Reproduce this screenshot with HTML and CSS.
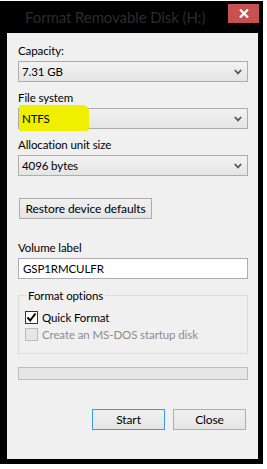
FILE: index.html
```html
<!DOCTYPE html>
<html lang="en">
<head>
    <meta charset="UTF-8">
    <meta name="viewport" content="width=device-width, initial-scale=1.0">
    <title>Format Removable Disk (H:)</title>
    <link rel="stylesheet" href="styles.css">
</head>
<body>
    <div class="window">
        <div class="titlebar">
            <div class="title">Format Removable Disk (H:)</div>
            <div class="close-btn">
                <svg width="10" height="9" viewBox="0 0 10 9"><path d="M1 0.5 L9 8.5 M9 0.5 L1 8.5" stroke="#fff" stroke-width="2.2"/></svg>
            </div>
        </div>
        <div class="client">
            <div class="label first">Capacity:</div>
            <div class="combo">
                <span>7.31 GB</span>
                <svg class="chev" width="8" height="6" viewBox="0 0 8 6"><path d="M0.8 1 L4 4.4 L7.2 1" fill="none" stroke="#555" stroke-width="1.8"/></svg>
            </div>

            <div class="label">File system</div>
            <div class="combo highlighted">
                <span class="marker">NTFS</span>
                <svg class="chev" width="8" height="6" viewBox="0 0 8 6"><path d="M0.8 1 L4 4.4 L7.2 1" fill="none" stroke="#555" stroke-width="1.8"/></svg>
            </div>

            <div class="label">Allocation unit size</div>
            <div class="combo">
                <span>4096 bytes</span>
                <svg class="chev" width="8" height="6" viewBox="0 0 8 6"><path d="M0.8 1 L4 4.4 L7.2 1" fill="none" stroke="#555" stroke-width="1.8"/></svg>
            </div>

            <button class="btn restore">Restore device defaults</button>

            <div class="label volume">Volume label</div>
            <div class="textbox">GSP1RMCULFR</div>

            <fieldset class="group">
                <legend>Format options</legend>
                <div class="check-row">
                    <span class="checkbox checked">
                        <svg width="11" height="11" viewBox="0 0 11 11"><path d="M1.5 5.5 L4.2 8.5 L9.5 1.5" fill="none" stroke="#000" stroke-width="2"/></svg>
                    </span>
                    <span>Quick Format</span>
                </div>
                <div class="check-row disabled">
                    <span class="checkbox"></span>
                    <span>Create an MS-DOS startup disk</span>
                </div>
            </fieldset>

            <div class="progress"></div>

            <div class="actions">
                <button class="btn default">Start</button>
                <button class="btn">Close</button>
            </div>
        </div>
    </div>
</body>
</html>
```

FILE: styles.css
```css
body {
    margin: 0;
    padding-top: 1px;
    background: #fff;
    font-family: Lato, "Open Sans", sans-serif;
    font-size: 11.5px;
    letter-spacing: -0.1px;
    color: #000;
}
.window {
    width: 263px;
    height: 463px;
    background: #000;
    display: flex;
    flex-direction: column;
}
.titlebar {
    height: 32px;
    display: flex;
    align-items: flex-start;
}
.title {
    padding-left: 25px;
    padding-top: 6px;
    font-size: 15px;
    line-height: 20px;
    color: #2c2c2c;
    white-space: nowrap;
}
.close-btn {
    margin-left: auto;
    margin-right: 4px;
    margin-top: 3px;
    width: 31px;
    height: 19px;
    background: #c75050;
    display: flex;
    align-items: center;
    justify-content: center;
}
.client {
    margin-left: 7px;
    width: 240px;
    height: 416px;
    padding: 10px 0 0 11px;
    background: #f0f0f0;
    display: flex;
    flex-direction: column;
    align-items: flex-start;
}
.label {
    line-height: 15px;
    margin-top: 8px;
    margin-bottom: 3px;
}
.label.first {
    margin-top: 0;
}
.combo {
    box-sizing: border-box;
    width: 230px;
    height: 21px;
    border: 1px solid #acacac;
    background: linear-gradient(#f2f2f2, #e5e5e5);
    display: flex;
    align-items: center;
    padding: 0 5px 0 3px;
    line-height: 15px;
}
.combo .chev {
    margin-left: auto;
}
.combo.highlighted {
    position: relative;
}
.marker {
    position: relative;
    z-index: 1;
}
.combo.highlighted::before {
    content: "";
    position: absolute;
    left: 0;
    top: -4px;
    width: 70px;
    height: 26px;
    background: #eef000;
    border-radius: 2px 6px 3px 1px;
}
.btn {
    box-sizing: border-box;
    height: 21px;
    padding: 0;
    border: 1px solid #adadad;
    background: linear-gradient(#f0f0f0, #e5e5e5);
    font-family: inherit;
    font-size: 12px;
    letter-spacing: -0.1px;
    color: #000;
}
.restore {
    margin-top: 22px;
    margin-left: 1px;
    width: 133px;
}
.label.volume {
    margin-top: 21px;
}
.textbox {
    box-sizing: border-box;
    width: 230px;
    height: 21px;
    border: 1px solid #abadb3;
    background: #fff;
    padding: 0 4px;
    line-height: 19px;
}
.group {
    box-sizing: border-box;
    width: 230px;
    height: 66px;
    margin: 9px 0 0;
    padding: 7px 0 0 6px;
    border: 1px solid #dcdcdc;
    border-radius: 0;
}
.group legend {
    padding: 0 2px;
    margin-left: 1px;
    line-height: 15px;
}
.check-row {
    display: flex;
    align-items: center;
    gap: 4px;
    height: 15px;
    margin-bottom: 2px;
}
.check-row.disabled {
    color: #8d8d8d;
}
.checkbox {
    box-sizing: border-box;
    width: 13px;
    height: 13px;
    border: 1px solid #333;
    background: #fff;
    display: flex;
    align-items: center;
    justify-content: center;
}
.disabled .checkbox {
    border-color: #bcbcbc;
    background: #e6e6e6;
}
.progress {
    box-sizing: border-box;
    width: 230px;
    height: 13px;
    margin-top: 13px;
    border: 1px solid #bcbcbc;
    background: #e6e6e6;
}
.actions {
    display: flex;
    gap: 8px;
    margin-top: 29px;
    margin-left: 74px;
}
.actions .btn {
    width: 73px;
}
.btn.default {
    border-color: #3399ff;
}
```
